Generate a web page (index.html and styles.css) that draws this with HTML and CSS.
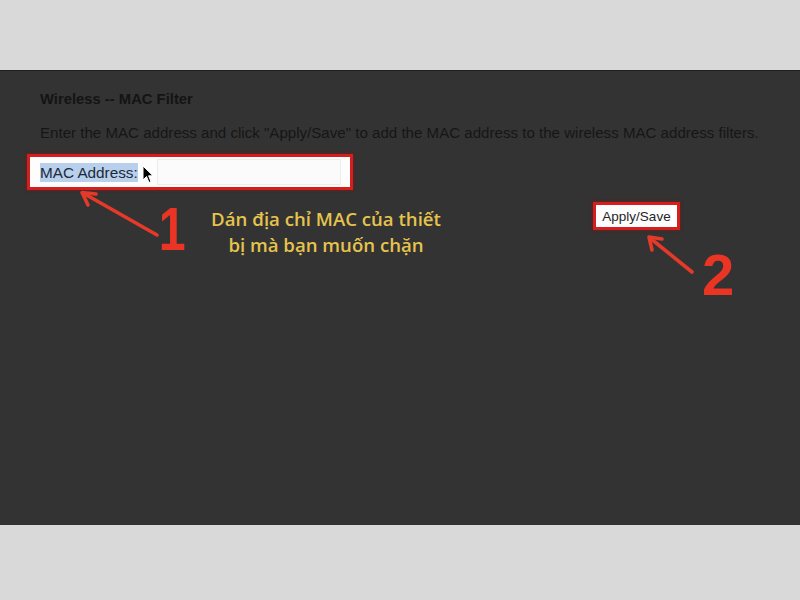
FILE: index.html
```html
<!DOCTYPE html>
<html lang="vi">
<head>
<meta charset="utf-8">
<link rel="stylesheet" href="styles.css">
</head>
<body>
<div class="top"></div>
<div class="screen">
  <h1 class="title">Wireless -- MAC Filter</h1>
  <p class="desc">Enter the MAC address and click "Apply/Save" to add the MAC address to the wireless MAC address filters.</p>
  <div class="mac-row">
    <span class="mac-label">MAC Address:</span>
    <svg class="cursor" width="12" height="19" viewBox="0 0 12 19"><path d="M1 1 L1 15 L4.5 11.5 L7 17.5 L9 16.6 L6.6 10.8 L11 10.8 Z" fill="#000" stroke="#fff" stroke-width="1"/></svg>
    <span class="mac-input"></span>
  </div>
  <div class="actions">
    <span class="apply"><span class="apply-btn">Apply/Save</span></span>
  </div>

  <svg class="arrows" width="800" height="455" viewBox="0 70 800 455">
    <g stroke="#e5392a" stroke-width="3.6" stroke-linecap="round" stroke-linejoin="round" fill="none">
      <path d="M157 234 L83 192"/>
      <path d="M96 193 L82 191.5 L88 204"/>
      <path d="M692 271 L650 237"/>
      <path d="M662 238 L649 236 L652 249"/>
    </g>
  </svg>
  <span class="num num1">1</span>
  <span class="num num2">2</span>
  <p class="note">Dán địa chỉ MAC của thiết<br>bị mà bạn muốn chặn</p>
</div>
<div class="bottom"></div>
</body>
</html>
```
FILE: styles.css
```css
html, body {
  margin: 0;
  padding: 0;
}
body {
  background: #d9d9d9;
  width: 800px;
  height: 600px;
  overflow: hidden;
  font-family: "Liberation Sans", Arial, sans-serif;
}
.top {
  height: 70px;
  background: #d9d9d9;
}
.screen {
  position: relative;
  height: 455px;
  background: #333333;
  border-top: 1px solid #1f1f1f;
  box-sizing: border-box;
  padding: 19px 0 0 40px;
}
.title {
  margin: 0;
  font-size: 14.8px;
  font-weight: bold;
  color: #141414;
  line-height: 18px;
}
.desc {
  margin: 16px 0 0;
  font-size: 15.1px;
  color: #161616;
  line-height: 18px;
  white-space: nowrap;
}
.mac-row {
  margin: 12px 0 0 -13px;
  width: 310px;
  height: 30px;
  box-sizing: content-box;
  background: #fdfdfd;
  border: 3px solid #d3201f;
  box-shadow: 0 0 2px 1px rgba(130, 20, 20, 0.6);
  display: flex;
  align-items: center;
  padding: 0 0 0 10px;
}
.mac-label {
  font-size: 15.3px;
  color: #1c2a3a;
  background: #b8d0ec;
  padding: 1px 0;
  line-height: 17px;
}
.cursor {
  margin: 5px 0 0 4px;
}
.mac-input {
  display: block;
  width: 184px;
  height: 26px;
  margin-left: 3px;
  background: #fbfbfb;
  border: 1px solid #ececec;
  box-sizing: border-box;
}
.actions {
  margin: 12px 0 0 553px;
}
.apply {
  display: inline-flex;
  width: 87px;
  height: 28px;
  box-sizing: border-box;
  background: #fdfdfd;
  border: 3px solid #d3201f;
  box-shadow: 0 0 2px 1px rgba(130, 20, 20, 0.6);
  align-items: center;
  justify-content: center;
}
.apply-btn {
  font-size: 13.5px;
  color: #262626;
}
.arrows {
  position: absolute;
  left: 0;
  top: 0;
}
.num {
  position: absolute;
  font-family: "Liberation Sans", Arial, sans-serif;
  font-weight: bold;
  font-size: 62px;
  line-height: 62px;
  color: #ea3424;
}
.num1 {
  left: 155px;
  top: 127px;
  transform: scaleX(0.78);
}
.num2 {
  left: 702px;
  top: 173px;
  font-size: 58px;
}
.note {
  position: absolute;
  left: 176px;
  top: 135px;
  width: 300px;
  margin: 0;
  text-align: center;
  font-family: "Open Sans", "Noto Sans", sans-serif;
  font-weight: 600;
  font-size: 18.6px;
  line-height: 26px;
  color: #e6c34d;
}
.bottom {
  height: 75px;
  background: #d9d9d9;
}
```
